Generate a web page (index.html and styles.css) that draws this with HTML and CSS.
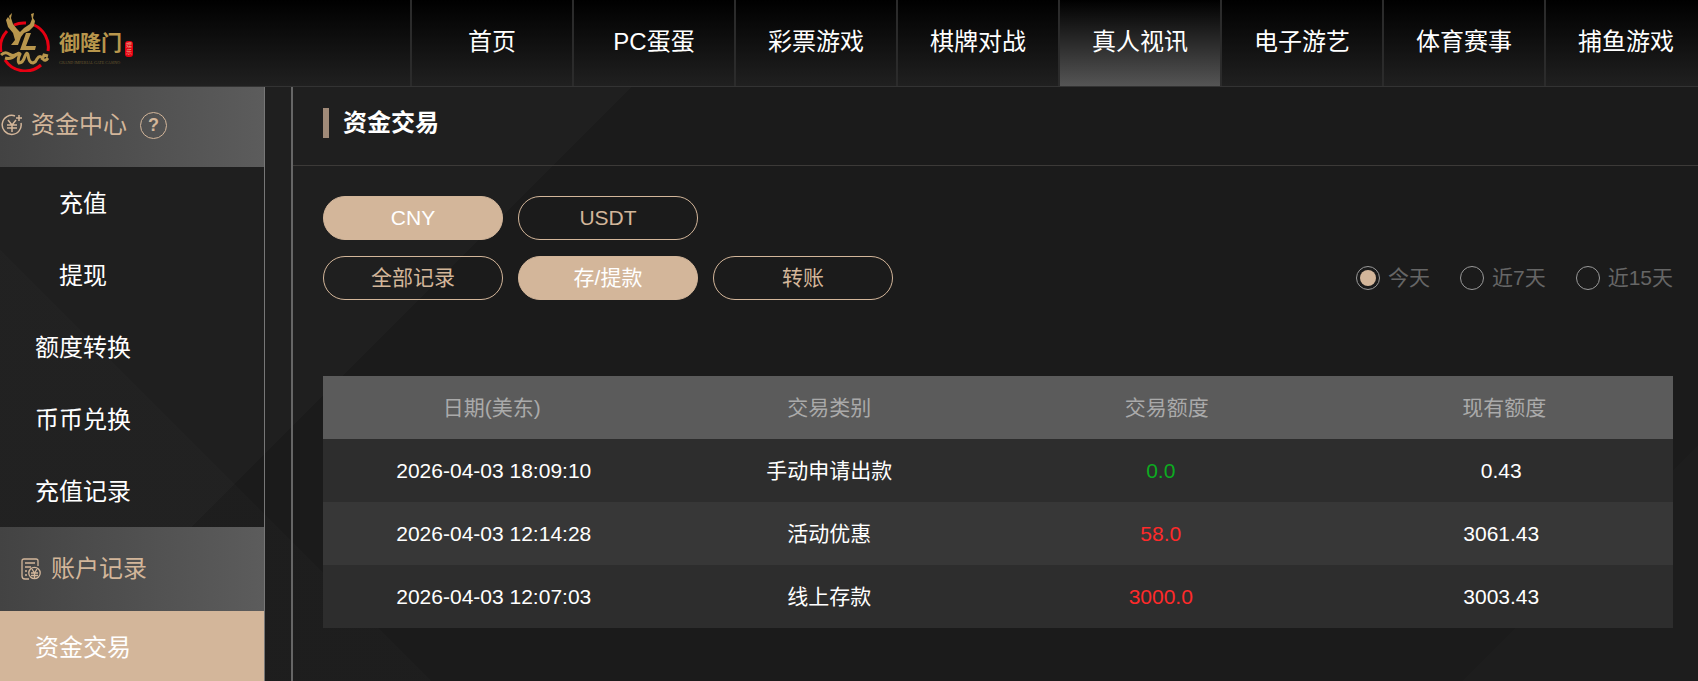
FILE: index.html
```html
<!DOCTYPE html>
<html lang="zh-CN">
<head>
	<meta charset="utf-8">
	<meta name="viewport" content="width=device-width, initial-scale=1">
	<title>资金交易</title>
	<link rel="stylesheet" href="styles.css">
</head>
<body>

<header class="header">
	<a class="logo" href="#" title="御隆门">
		<svg class="logo-mark" width="50" height="60" viewBox="0 0 50 60">
			<path d="M14 13A24 24 0 0 1 26 11M34 13A24 24 0 0 1 48 39M41 53A24 24 0 0 1 5 48M1 40A24 24 0 0 1 7 19" fill="none" stroke="#e60012" stroke-width="3"/>
			<path d="M12 1L11 6L13 12L17 17L20 20L24 16L30 12L32 7L31 2L34 1L33 6L35 9L34 14L29 19L24 21L21 25L18 33H11L15 28L13 21L8 15L6 8L8 5L10 8L9 4Z" fill="#b8964c"/>
			<path d="M26 21H31L26 34H36L35 38H20Z" fill="#b8964c"/>
			<path d="M1 43Q5 39 9 42T17 42" fill="none" stroke="#b8964c" stroke-width="3"/>
			<path d="M5 46Q11 48 16 43Q19 40 20 42Q17 48 19 51Q23 51 25 44Q27 39 28 43Q29 51 33 51Q36 50 37 47Q40 42 43 47Q45 50 48 46M42 48L44 43L48 44" fill="none" stroke="#b8964c" stroke-width="3"/>
		</svg>
		<span class="logo-text">
			<span class="logo-name">御隆门</span>
			<span class="logo-sub">GRAND IMPERIAL GATE CASINO</span>
		</span>
		<span class="logo-seal">娱乐</span>
	</a>
	<nav class="nav">
		<a class="nav-item" href="#">首页</a>
		<a class="nav-item" href="#">PC蛋蛋</a>
		<a class="nav-item" href="#">彩票游戏</a>
		<a class="nav-item" href="#">棋牌对战</a>
		<a class="nav-item active" href="#">真人视讯</a>
		<a class="nav-item" href="#">电子游艺</a>
		<a class="nav-item" href="#">体育赛事</a>
		<a class="nav-item" href="#">捕鱼游戏</a>
	</nav>
</header>

<div class="page">
	<aside class="sidebar">
		<div class="side-title">
			<svg width="22" height="22" viewBox="0 0 22 22" fill="none" stroke="#d3b69a" stroke-width="1.500">
				<path d="M14 2A9.500 9.500 0 1 0 20 9M18 1V7M15 4H21M7 6L11 11L15 6M6 11H16M6 14H16M11 11V18"/>
			</svg>
			<span>资金中心</span>
			<button class="help" type="button" title="帮助">?</button>
		</div>
		<a class="side-item" href="#">充值</a>
		<a class="side-item" href="#">提现</a>
		<a class="side-item" href="#">额度转换</a>
		<a class="side-item" href="#">币币兑换</a>
		<a class="side-item" href="#">充值记录</a>
		<div class="side-title records">
			<svg width="20" height="22" viewBox="0 0 20 22" fill="none" stroke="#d3b69a" stroke-width="1.300">
				<path d="M17 8V3Q17 1 15 1H3Q1 1 1 3V18Q1 21 4 21H8M4 5H14M4 9H10M4 13H6M4 17H6"/>
				<circle cx="13.500" cy="15" r="5.700"/>
				<path d="M11 11L13.500 15L16 11M10 15H17M10 17.500H17M13.500 15V20"/>
			</svg>
			<span>账户记录</span>
		</div>
		<a class="side-item active" href="#">资金交易</a>
	</aside>

	<main class="main">
		<div class="main-title"><h1>资金交易</h1></div>

		<div class="content">
			<div class="row">
				<button class="pill active" type="button">CNY</button>
				<button class="pill" type="button">USDT</button>
			</div>
			<div class="row">
				<button class="pill" type="button">全部记录</button>
				<button class="pill active" type="button">存/提款</button>
				<button class="pill" type="button">转账</button>
				<div class="days">
					<label><input type="radio" name="days" checked>今天</label>
					<label><input type="radio" name="days">近7天</label>
					<label><input type="radio" name="days">近15天</label>
				</div>
			</div>

			<table class="records-table">
				<thead>
					<tr><th>日期(美东)</th><th>交易类别</th><th>交易额度</th><th>现有额度</th></tr>
				</thead>
				<tbody>
					<tr>
						<td class="date">2026-04-03 18:09:10</td>
						<td>手动申请出款</td>
						<td class="amount out">0.0</td>
						<td class="balance">0.43</td>
					</tr>
					<tr>
						<td class="date">2026-04-03 12:14:28</td>
						<td>活动优惠</td>
						<td class="amount">58.0</td>
						<td class="balance">3061.43</td>
					</tr>
					<tr>
						<td class="date">2026-04-03 12:07:03</td>
						<td>线上存款</td>
						<td class="amount">3000.0</td>
						<td class="balance">3003.43</td>
					</tr>
				</tbody>
			</table>
		</div>
	</main>
</div>

</body>
</html>
```
FILE: styles.css
```css
* {
	box-sizing: border-box;
}

body {
	margin: 0;
	height: 100vh;
	display: flex;
	flex-direction: column;
	overflow: hidden;
	font-family: "Liberation Sans", "Noto Sans CJK SC", sans-serif;
	font-size: 21px;
	line-height: 24px;
	color: white;
	/* large faint diagonal facets */
	background:
		linear-gradient(45deg, rgba(255, 255, 255, .01) 305px, transparent 305px),
		linear-gradient(135deg, #1f1f1f 508px, #1b1b1b 508px, #1b1b1b 1516px, #1d1d1d 1516px);
}

a {
	color: inherit;
	text-decoration: none;
}

/* Top bar */
.header {
	display: flex;
	flex: none;
	height: 87px;
	border-bottom: 1px solid #333;
	background: linear-gradient(#000, #202020);
}

.logo {
	display: flex;
	flex: none;
	align-items: flex-start;
	width: 410px;
	padding-top: 12px;
}

.logo-text {
	display: flex;
	flex-direction: column;
	margin: 14px 3px 0 9px;
	color: #b8964c;
}

.logo-name {
	font-size: 21px;
	font-weight: bold;
	line-height: 34px;
}

.logo-sub {
	width: 63px;
	font-family: "Liberation Serif", serif;
	font-size: 4px;
	line-height: 6px;
	white-space: nowrap;
	color: #6b5930;
}

.logo-seal {
	width: 8px;
	margin-top: 29px;
	padding: 1px 0;
	border-radius: 3px;
	background: #e60012;
	color: #e8a080;
	font-size: 6px;
	line-height: 7px;
	text-align: center;
}

.nav {
	display: flex;
	flex: 1;
	min-width: 0;
}

.nav-item {
	flex: none;
	width: 162px;
	border-left: 2px solid #2b2b2b;
	font-size: 24px;
	line-height: 84px;
	text-align: center;
}

.nav-item.active, .nav-item:hover {
	background: linear-gradient(#000, #555);
}

/* Left menu */
.page {
	display: flex;
	flex: 1;
	min-height: 0;
}

.sidebar {
	flex: none;
	width: 265px;
	border-right: 1px solid #777;
	font-size: 24px;
	overflow: hidden;
}

.side-title {
	display: flex;
	align-items: center;
	gap: 8px;
	height: 80px;
	padding: 0 0 4px 1px;
	color: #d3b69a;
	background: linear-gradient(to right, #434343, #5c5c5c);
}

.side-title.records {
	height: 84px;
	padding: 0 0 0 21px;
	gap: 10px;
}

.help {
	width: 27px;
	height: 27px;
	margin-left: 5px;
	padding: 0;
	border: 1px solid #d3b69a;
	border-radius: 50%;
	background: none;
	color: inherit;
	font: bold 18px "Liberation Sans", sans-serif;
}

.side-item {
	display: block;
	height: 72px;
	padding-right: 98px;
	line-height: 74px;
	text-align: center;
}

.side-item.active {
	background: #d3b69a;
}

/* Main panel */
.main {
	flex: 1;
	min-width: 0;
	margin-left: 26px;
	border-left: 2px solid #666;
}

.main-title {
	display: flex;
	align-items: center;
	height: 79px;
	padding: 0 30px 6px;
	border-bottom: 1px solid #3c3a38;
}

.main-title h1 {
	margin: 0;
	padding-left: 14px;
	border-left: 6px solid #a08a78;
	font-size: 24px;
	line-height: 30px;
}

.content {
	padding: 30px 25px 0 30px;
}

.row {
	display: flex;
	align-items: center;
	gap: 15px;
	margin-bottom: 16px;
}

.pill {
	width: 180px;
	height: 44px;
	padding: 0;
	border: 1px solid #d3b69a;
	border-radius: 22px;
	background: none;
	color: #d3b69a;
	font: inherit;
}

.pill.active {
	background: #d3b69a;
	color: white;
}

.days {
	display: flex;
	gap: 30px;
	margin-left: auto;
	color: #666;
}

.days label {
	display: flex;
	align-items: center;
	gap: 8px;
}

.days input {
	appearance: none;
	width: 24px;
	height: 24px;
	margin: 0;
	padding: 3px;
	border: 1px solid #999;
	border-radius: 50%;
}

.days input:checked {
	background: #d3b69a content-box;
}

.records-table {
	width: 100%;
	margin-top: 76px;
	border-collapse: collapse;
	table-layout: fixed;
	text-align: center;
}

.records-table th, .records-table td {
	height: 63px;
	padding: 0;
}

.records-table th {
	background: #5b5b5b;
	color: #aaa;
	font-weight: normal;
}

.records-table td {
	background: #2d2d2d;
}

.records-table tr:nth-child(even) td {
	background: #373737;
}

.records-table .date {
	padding-left: 4px;
}

.records-table .amount {
	padding-right: 12px;
	color: #ff2a2a;
}

.records-table .out {
	color: #0cab20;
}

.records-table .balance {
	padding-right: 6px;
}
```
